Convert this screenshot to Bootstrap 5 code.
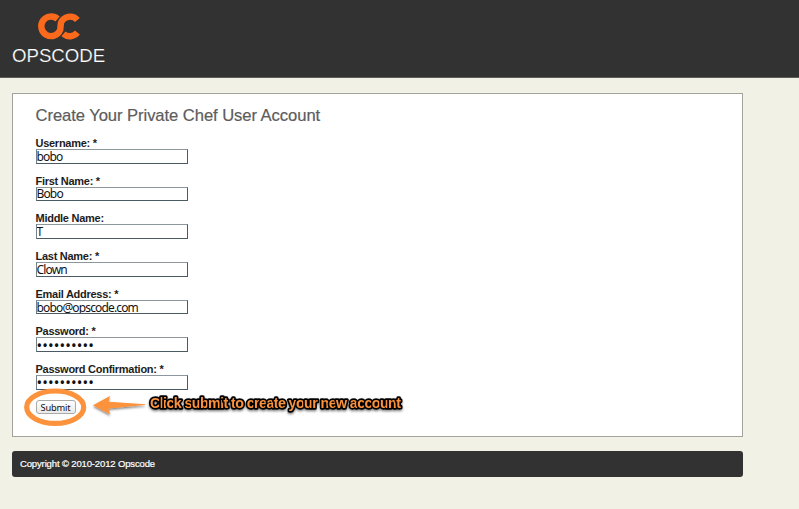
<!DOCTYPE html>
<html lang="en">
<head>
<meta charset="utf-8">
<meta name="viewport" content="width=device-width, initial-scale=1">
<title>Opscode - Create Your Private Chef User Account</title>
<link href="https://cdn.jsdelivr.net/npm/bootstrap@5.3.0/dist/css/bootstrap.min.css" rel="stylesheet">
<style>
body{background:#f1f1e5;font-family:"Liberation Sans",Arial,sans-serif;color:#1c1c1c;overflow:hidden}
.site-head{height:77.5px;background:#323232;border-bottom:1px solid #5c5c58}
.site-logo{width:120px;height:76px}
.page-col{width:731px;margin-left:12px}
.panel{height:344px;margin-top:15px;background:#fff;border:1px solid #a3a39b;padding:12px 22px 0 22.5px}
.panel h1{font-size:16.6px;line-height:20px;letter-spacing:-.06px;color:#5c5c5c;margin-bottom:11.5px;-webkit-text-stroke:.2px #5c5c5c}
.field{height:37.7px}
.field label{font-size:11px;line-height:12px;font-weight:700;letter-spacing:-.27px}
.field input{width:152.5px;height:14.6px;border:1px solid #4b5b64;border-top-color:#8b979c;border-left-color:#71818a;font:12px/12px "Noto Sans",sans-serif;letter-spacing:-.85px;color:#111;background:#fff;padding:0;border-radius:0;outline:0}
.field input[type=password]{font-size:15px;letter-spacing:.1px}
.send{width:40px;height:13.5px;font:9.3px/11px "Noto Sans",sans-serif;letter-spacing:-.2px;border:1px solid #aaa;border-radius:3px;background:linear-gradient(#fff,#e9e9e9);color:#111;padding:0;margin-top:-.5px}
.site-foot{height:26px;margin-top:14px;background:#323232;border-radius:3px;color:#fff;font-size:9.5px;letter-spacing:-.14px;padding:2px 0 0 8px;-webkit-text-stroke:.2px #fff}
.callout-art{left:0;top:380px;width:430px;height:60px;pointer-events:none}
</style>
</head>
<body>
<header class="site-head">
<svg class="site-logo d-block" viewBox="0 0 120 76" role="img" aria-label="Opscode">
<g fill="none" stroke="#fb6a1c" stroke-width="6.4">
<path d="M57.6 19A9.8 9.8 0 1 0 60.2 29.9L60.9 22.9A9.8 9.8 0 0 1 77.4 20"/>
<path d="M63.4 33.9A9.8 9.8 0 0 0 77.4 32.6"/>
</g>
<text x="12" y="62.3" font-size="18.4" fill="#fff" textLength="93.2" lengthAdjust="spacingAndGlyphs" stroke="#323232" stroke-width=".2">OPSCODE</text>
</svg>
</header>
<div class="page-col">
<main class="panel">
<h1 class="fw-normal">Create Your Private Chef User Account</h1>
<form>
<div class="field d-flex flex-column"><label for="u">Username: *</label><input id="u" value="bobo"></div>
<div class="field d-flex flex-column"><label for="f">First Name: *</label><input id="f" value="Bobo"></div>
<div class="field d-flex flex-column"><label for="m">Middle Name:</label><input id="m" value="T"></div>
<div class="field d-flex flex-column"><label for="l">Last Name: *</label><input id="l" value="Clown"></div>
<div class="field d-flex flex-column"><label for="e">Email Address: *</label><input id="e" value="bobo@opscode.com"></div>
<div class="field d-flex flex-column"><label for="p">Password: *</label><input id="p" type="password" value="secretpass"></div>
<div class="field d-flex flex-column"><label for="c">Password Confirmation: *</label><input id="c" type="password" value="secretpass"></div>
<button class="send d-block" type="button">Submit</button>
</form>
</main>
<footer class="site-foot d-flex align-items-center">Copyright © 2010-2012 Opscode</footer>
</div>
<svg class="callout-art position-absolute" viewBox="0 380 430 60">
<defs><filter id="sh" x="-10%" y="-30%" width="120%" height="180%"><feDropShadow dx="0" dy="1.5" stdDeviation="1.2" flood-opacity=".5"/></filter></defs>
<ellipse cx="55.2" cy="407.2" rx="28.5" ry="16.2" fill="none" stroke="#fc923b" stroke-width="5.2"/>
<path filter="url(#sh)" fill="#fc923b" d="M93 405.3L110 396L108.5 401.8L145 404.2L145 405L108.5 408.5L110 414.5Z"/>
<g filter="url(#sh)"><text x="150" y="407.8" font-size="14.3" font-weight="700" fill="#fc923b" stroke="#000" stroke-width="3.4" stroke-linejoin="round" paint-order="stroke" textLength="251" lengthAdjust="spacing">Click submit to create your new account</text></g>
</svg>
<script src="https://cdn.jsdelivr.net/npm/bootstrap@5.3.0/dist/js/bootstrap.bundle.min.js"></script>
</body>
</html>
